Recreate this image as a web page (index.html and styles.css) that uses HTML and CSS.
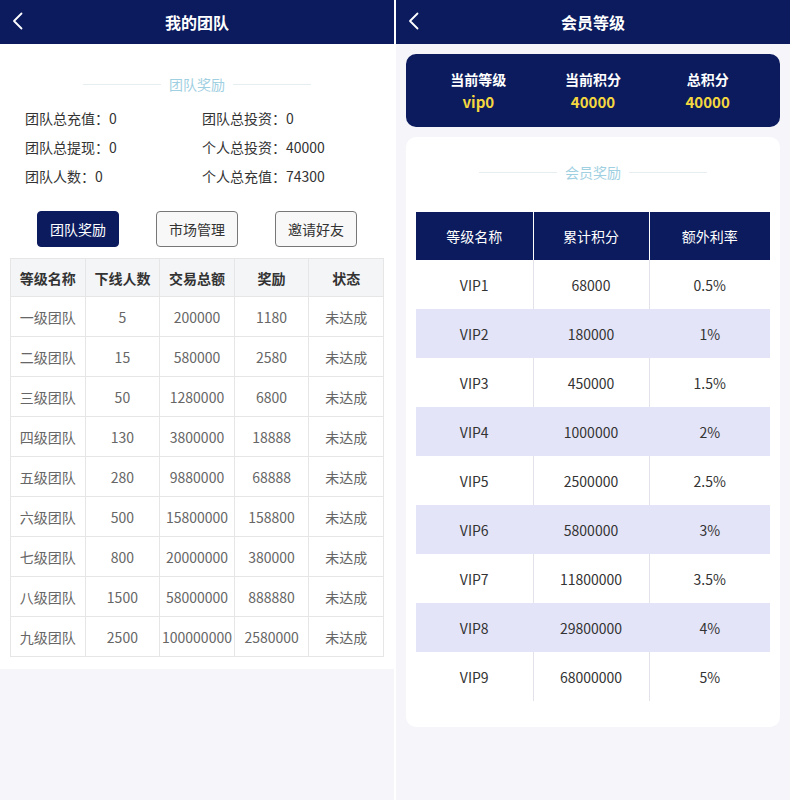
FILE: index.html
```html
<!DOCTYPE html>
<html lang="zh-CN">
<head>
    <meta charset="UTF-8">
    <meta name="viewport" content="width=device-width, initial-scale=1.0"/>
    <title>我的团队 / 会员等级</title>
    <link rel="stylesheet" href="styles.css">
</head>
<body>
<div class="screens">

    <!-- 我的团队 -->
    <section class="screen">
        <header class="topbar">
            <svg class="back" width="12" height="18" viewBox="0 0 12 18"><polyline points="9.5,1.5 2,9 9.5,16.5" fill="none" stroke="#fff" stroke-width="1.8" stroke-linecap="round" stroke-linejoin="round"/></svg>
            <h1>我的团队</h1>
        </header>

        <div class="panel">
            <div class="sec-title"><span>团队奖励</span></div>

            <div class="stats">
                <p>团队总充值：0</p>
                <p>团队总投资：0</p>
                <p>团队总提现：0</p>
                <p>个人总投资：40000</p>
                <p>团队人数：0</p>
                <p>个人总充值：74300</p>
            </div>

            <div class="tabs">
                <button class="tab active">团队奖励</button>
                <button class="tab">市场管理</button>
                <button class="tab">邀请好友</button>
            </div>

            <table class="team-table">
                <thead>
                <tr><th>等级名称</th><th>下线人数</th><th>交易总额</th><th>奖励</th><th>状态</th></tr>
                </thead>
                <tbody id="team-rows"></tbody>
            </table>
        </div>
    </section>

    <!-- 会员等级 -->
    <section class="screen">
        <header class="topbar">
            <svg class="back" width="12" height="18" viewBox="0 0 12 18"><polyline points="9.5,1.5 2,9 9.5,16.5" fill="none" stroke="#fff" stroke-width="1.8" stroke-linecap="round" stroke-linejoin="round"/></svg>
            <h1>会员等级</h1>
        </header>

        <div class="level-card">
            <div class="level-item"><b>当前等级</b><span>vip0</span></div>
            <div class="level-item"><b>当前积分</b><span>40000</span></div>
            <div class="level-item"><b>总积分</b><span>40000</span></div>
        </div>

        <div class="card">
            <div class="sec-title"><span>会员奖励</span></div>
            <table class="vip-table">
                <colgroup><col class="c1"><col class="c2"><col></colgroup>
                <thead>
                <tr><th>等级名称</th><th>累计积分</th><th>额外利率</th></tr>
                </thead>
                <tbody id="vip-rows"></tbody>
            </table>
        </div>
    </section>

</div>

<script>
    const team = [
        ['一级团队', 5, 200000, 1180],
        ['二级团队', 15, 580000, 2580],
        ['三级团队', 50, 1280000, 6800],
        ['四级团队', 130, 3800000, 18888],
        ['五级团队', 280, 9880000, 68888],
        ['六级团队', 500, 15800000, 158800],
        ['七级团队', 800, 20000000, 380000],
        ['八级团队', 1500, 58000000, 888880],
        ['九级团队', 2500, 100000000, 2580000]
    ];
    document.getElementById('team-rows').innerHTML = team
        .map(r => '<tr><td>' + r.join('</td><td>') + '</td><td>未达成</td></tr>')
        .join('');

    const vip = [
        [68000, '0.5%'], [180000, '1%'], [450000, '1.5%'],
        [1000000, '2%'], [2500000, '2.5%'], [5800000, '3%'],
        [11800000, '3.5%'], [29800000, '4%'], [68000000, '5%']
    ];
    document.getElementById('vip-rows').innerHTML = vip
        .map((r, i) => '<tr><td>VIP' + (i + 1) + '</td><td>' + r[0] + '</td><td>' + r[1] + '</td></tr>')
        .join('');
</script>
</body>
</html>
```

FILE: styles.css
```css
body {
    margin: 0;
    background: #fff;
    font-family: "Noto Sans CJK SC", "Noto Sans", sans-serif;
    color: #333;
}

.screens {
    display: flex;
    gap: 2px;
    height: 800px;
}

.screen {
    width: 394px;
    background: #f5f5fa;
    display: flex;
    flex-direction: column;
}

.topbar {
    height: 44px;
    background: #0b1b5e;
    display: flex;
    align-items: center;
    justify-content: center;
    position: relative;
}

.topbar h1 {
    margin: 0;
    font-size: 16px;
    font-weight: bold;
    color: #fff;
}

.back {
    position: absolute;
    left: 12px;
    top: 12px;
}

/* section title with thin rules on both sides */
.sec-title {
    display: flex;
    justify-content: center;
    align-items: center;
    gap: 8px;
    font-size: 14px;
    line-height: 20px;
    color: #9fd0e2;
}

.sec-title::before,
.sec-title::after {
    content: "";
    width: 78px;
    height: 1px;
    background: #e6eef2;
}

/* ---- 我的团队 ---- */
.panel {
    background: #fff;
    padding: 30px 0 12px;
}

.stats {
    display: grid;
    grid-template-columns: 177px 1fr;
    padding: 10px 0 0 25px;
}

.stats p {
    margin: 0;
    font-size: 14px;
    line-height: 29px;
    color: #333;
}

.tabs {
    display: flex;
    justify-content: space-evenly;
    margin: 20px 0 11px;
}

.tab {
    width: 82px;
    height: 36px;
    border: 1px solid #777;
    border-radius: 4px;
    background: #f8f8f8;
    font-family: inherit;
    font-size: 14px;
    color: #333;
    padding: 0;
}

.tab.active {
    background: #0b1b5e;
    border-color: #0b1b5e;
    color: #fff;
}

.team-table {
    width: 374px;
    margin: 0 10px;
    border-collapse: collapse;
    table-layout: fixed;
    font-size: 14px;
}

.team-table th,
.team-table td {
    height: 39px;
    padding: 0;
    border: 1px solid #e6e6e6;
    text-align: center;
    white-space: nowrap;
}

.team-table th {
    height: 37px;
    background: #f3f5f7;
    font-weight: bold;
    color: #333;
}

.team-table td {
    color: #666;
}

/* ---- 会员等级 ---- */
.level-card {
    margin: 10px 10px 0;
    height: 73px;
    padding: 0 15px;
    border-radius: 10px;
    background: #0b1b5e;
    display: grid;
    grid-template-columns: repeat(3, 1fr);
    align-items: center;
}

.level-item {
    display: flex;
    flex-direction: column;
    align-items: center;
    gap: 3px;
    font-size: 14px;
    line-height: 20px;
}

.level-item b {
    color: #fff;
}

.level-item span {
    color: #f5d73f;
    font-weight: bold;
    font-size: 15px;
}

.card {
    margin: 10px 10px 0;
    padding: 25px 10px 26px;
    border-radius: 10px;
    background: #fff;
}

.vip-table {
    width: 100%;
    margin-top: 30px;
    border-collapse: collapse;
    table-layout: fixed;
    font-size: 14px;
}

.vip-table .c1 {
    width: 117px;
}

.vip-table .c2 {
    width: 116px;
}

.vip-table th,
.vip-table td {
    padding: 0;
    text-align: center;
}

.vip-table th {
    height: 48px;
    background: #0b1b5e;
    color: #fff;
    font-weight: normal;
    border-left: 1px solid #fff;
}

.vip-table td {
    height: 49px;
    color: #333;
    border-left: 1px solid #e2e2ea;
}

.vip-table th:first-child,
.vip-table td:first-child {
    border-left: none;
}

.vip-table tbody tr:nth-child(even) td {
    background: #e4e4f8;
    border-left-color: #e4e4f8;
}
```
